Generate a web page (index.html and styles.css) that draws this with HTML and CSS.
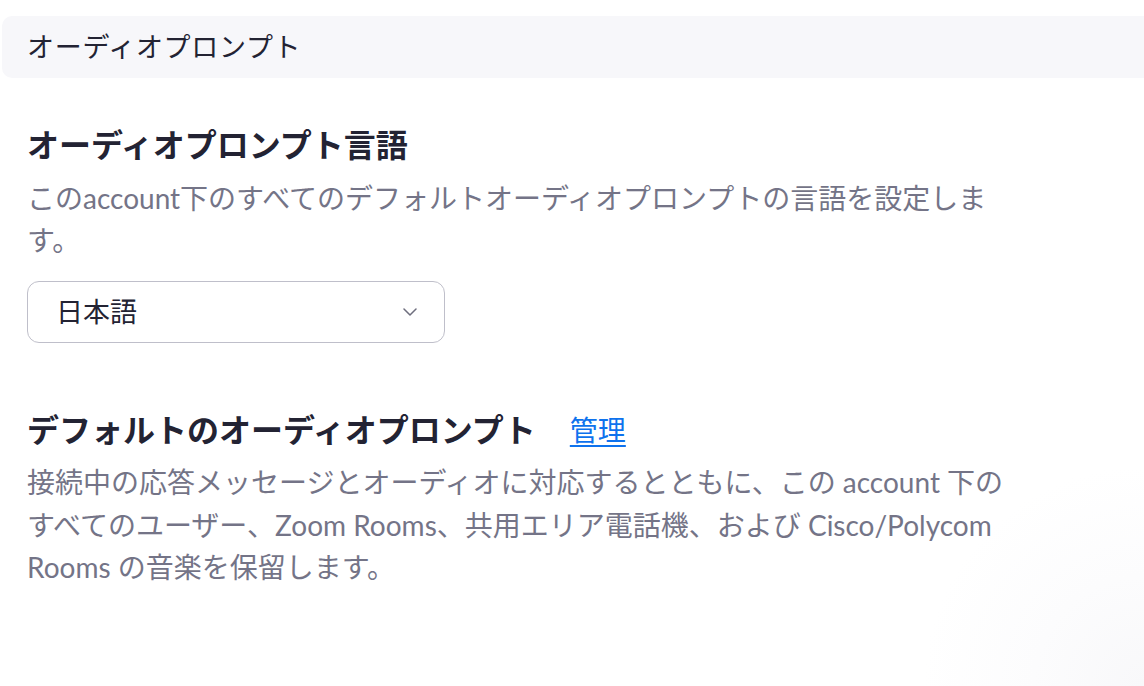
FILE: index.html
```html
<!DOCTYPE html>
<html lang="ja">
<head>
<meta charset="utf-8">
<title>オーディオプロンプト</title>
<link rel="stylesheet" href="styles.css">
</head>
<body>
<div class="topbar">オーディオプロンプト</div>
<main class="content">
  <section class="setting">
    <h2 class="title">オーディオプロンプト言語</h2>
    <p class="desc">このaccount下のすべてのデフォルトオーディオプロンプトの言語を設定します。</p>
    <div class="select">
      <span class="select-value">日本語</span>
      <svg class="chevron" width="14" height="8" viewBox="0 0 14 8"><path d="M1 1l6 6 6-6" fill="none" stroke="#6e6e7e" stroke-width="1.5" stroke-linecap="round" stroke-linejoin="round"/></svg>
    </div>
  </section>
  <section class="setting second">
    <h2 class="title">デフォルトのオーディオプロンプト<a class="manage" href="#">管理</a></h2>
    <p class="desc wide">接続中の応答メッセージとオーディオに対応するとともに、この account 下のすべてのユーザー、Zoom Rooms、共用エリア電話機、および Cisco/Polycom Rooms の音楽を保留します。</p>
  </section>
</main>
</body>
</html>
```
FILE: styles.css
```css
html, body {
  margin: 0;
  padding: 0;
}
body {
  width: 1144px;
  height: 686px;
  overflow: hidden;
  padding-top: 16px;
  box-sizing: border-box;
  font-family: "Lato", "Noto Sans CJK JP", sans-serif;
  color: #232333;
  background: radial-gradient(circle at 100% 100%, #f8f8fa 0, #fcfcfd 110px, #ffffff 220px);
}
.topbar {
  margin-left: 2px;
  height: 62px;
  line-height: 62px;
  padding-left: 25px;
  background: #f7f7fa;
  border-radius: 10px 0 0 10px;
  font-size: 27px;
  letter-spacing: 0.7px;
  color: #232333;
}
.content {
  padding-left: 27px;
}
.setting {
  display: flex;
  flex-direction: column;
  align-items: flex-start;
}
.title {
  margin: 45px 0 0;
  font-size: 32px;
  line-height: 44px;
  font-weight: 700;
  color: #232333;
  display: flex;
  align-items: center;
}
.desc {
  margin: 10px 0 0;
  width: 975px;
  font-size: 28px;
  line-height: 42px;
  color: #747487;
}
.desc.wide {
  margin-top: 9px;
  width: 990px;
  line-height: 42.5px;
}
.select {
  margin-top: 20px;
  width: 418px;
  height: 62px;
  box-sizing: border-box;
  border: 1.5px solid #bfbfca;
  border-radius: 12px;
  display: flex;
  align-items: center;
  justify-content: space-between;
  padding: 0 27px 3px 28px;
  font-size: 27px;
  color: #232333;
}
.chevron {
  display: block;
  margin-top: 3px;
}
.second .title {
  margin-top: 65px;
}
.manage {
  margin-left: 34px;
  font-size: 28px;
  font-weight: 400;
  color: #0e72ed;
  text-decoration: underline;
  text-underline-offset: 4px;
}
```
